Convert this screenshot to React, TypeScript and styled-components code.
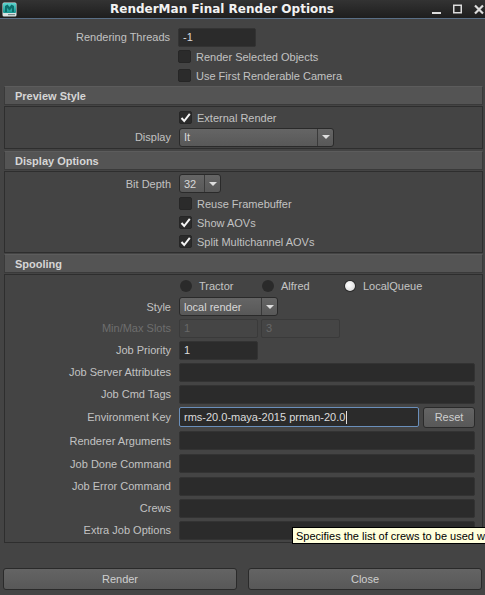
import React from 'react';
import styled, { createGlobalStyle } from 'styled-components';

const GlobalStyle = createGlobalStyle`
  html, body {
    margin: 0;
    padding: 0;
    background: #444444;
  }

  body {
    font-family: "Liberation Sans", Arial, sans-serif;
    font-size: 11px;
    color: #c4c4c4;
  }

  * {
    box-sizing: border-box;
  }
`;

// window chrome
const Window = styled.div`
  width: 485px;
  height: 595px;
  position: relative;
  overflow: hidden;

  display: flex;
  flex-direction: column;
  background: #444444;
`;

const TitleBar = styled.div`
  height: 19px;
  display: flex;
  align-items: center;
  padding-left: 2px;

  background: linear-gradient(#333333, #1e1e1e);
  border-bottom: 1px solid #5a6f86;
`;

const Title = styled.div`
  flex: 1;
  text-align: center;
  font-family: "DejaVu Sans", sans-serif;
  font-weight: bold;
  font-size: 12px;
  color: #f2f2f2;
`;

const WinControls = styled.div`
  width: 58px;
  display: flex;
  align-items: center;
  gap: 12px;
  padding-left: 5px;
`;

const Body = styled.div`
  flex: 1;
  display: flex;
  flex-direction: column;
  padding-top: 8px;
`;

const TopBlock = styled.div`
  padding-left: 4px;
  margin-bottom: 1px;
`;

// label / control rows
const Row = styled.div<{ $h: number }>`
  height: ${p => p.$h}px;
  display: grid;
  grid-template-columns: 166px 1fr;
  column-gap: 8px;
  align-items: center;
  padding-right: 7px;
`;

const Label = styled.div<{ $disabled?: boolean }>`
  text-align: right;
  white-space: nowrap;
  color: ${p => (p.$disabled ? '#6e6e6e' : '#c2c2c2')};
`;

const Inline = styled.div<{ $gap?: number }>`
  display: flex;
  align-items: center;
  gap: ${p => p.$gap ?? 3}px;
`;

const Field = styled.div<{ $w?: number; $focus?: boolean; $disabled?: boolean }>`
  ${p => (p.$w ? `width: ${p.$w}px;` : 'flex: 1;')}
  height: ${p => (p.$focus ? 20 : 19)}px;
  display: flex;
  align-items: center;
  padding-left: 4px;

  background: ${p => (p.$disabled ? '#454545' : '#2b2b2b')};
  border: 1px solid ${p => (p.$focus ? '#6a8fbb' : p.$disabled ? '#3a3a3a' : '#333333')};
  border-radius: 2px;
  color: ${p => (p.$disabled ? '#686868' : '#dcdcdc')};
  white-space: nowrap;
  overflow: hidden;
`;

const Caret = styled.span`
  display: inline-block;
  width: 1px;
  height: 13px;
  margin-left: 1px;
  background: #e0e0e0;
`;

const CheckItem = styled.div`
  display: flex;
  align-items: center;
  gap: 5px;
`;

const Box = styled.div`
  width: 13px;
  height: 13px;
  display: flex;
  align-items: center;
  justify-content: center;

  background: #2b2b2b;
  border: 1px solid #262626;
  border-radius: 2px;
`;

const CheckLabel = styled.span`
  color: #c2c2c2;
`;

// collapsible sections
const Section = styled.div<{ $gap: number }>`
  margin: ${p => p.$gap}px 2px 0 4px;
`;

const SectionHeader = styled.div`
  height: 19px;
  display: flex;
  align-items: center;
  padding-left: 10px;

  background: #545454;
  border: 1px solid #3a3a3a;
  border-top-color: #5c5c5c;
  font-weight: bold;
  color: #d6d6d6;
`;

const SectionFrame = styled.div<{ $gap: number }>`
  margin-top: ${p => p.$gap}px;
  padding: 1px 0;
  border: 1px solid #2e2e2e;
`;

const Select = styled.div<{ $w: number }>`
  width: ${p => p.$w}px;
  height: 19px;
  display: flex;

  background: linear-gradient(#656565, #585858);
  border: 1px solid #2a2a2a;
  border-radius: 3px;
  color: #d8d8d8;
`;

const SelectValue = styled.div`
  flex: 1;
  display: flex;
  align-items: center;
  padding-left: 4px;
`;

const SelectArrow = styled.div`
  width: 16px;
  display: flex;
  align-items: center;
  justify-content: center;
  border-left: 1px solid #3a3a3a;

  &::after {
    content: '';
    border-left: 4px solid transparent;
    border-right: 4px solid transparent;
    border-top: 4px solid #dedede;
  }
`;

const RadioGroup = styled.div`
  display: grid;
  grid-template-columns: 82px 82px auto;
  padding-left: 1px;
`;

const RadioItem = styled.div`
  display: flex;
  align-items: center;
  gap: 7px;
`;

const RadioDot = styled.div<{ $on?: boolean }>`
  width: 12px;
  height: 12px;
  display: flex;
  align-items: center;
  justify-content: center;
  border-radius: 50%;
  background: #2a2a2a;

  &::after {
    content: '';
    display: ${p => (p.$on ? 'block' : 'none')};
    width: 10px;
    height: 10px;
    border-radius: 50%;
    background: radial-gradient(circle at 40% 40%, #ffffff, #d0d0d0);
  }
`;

const PushButton = styled.div<{ $w?: number; $h?: number }>`
  ${p => (p.$w ? `width: ${p.$w}px;` : 'flex: 1;')}
  height: ${p => p.$h ?? 22}px;
  display: flex;
  align-items: center;
  justify-content: center;

  background: linear-gradient(#646464, #585858);
  border: 1px solid #2a2a2a;
  border-radius: 3px;
  color: #cfcfcf;
`;

const Footer = styled.div`
  flex: 1;
  display: flex;
  align-items: flex-end;
  gap: 11px;
  padding: 0 3px 5px;
`;

const Tooltip = styled.div`
  position: absolute;
  left: 292px;
  top: 527px;
  height: 17px;
  padding: 0 3px;

  display: flex;
  align-items: center;
  white-space: nowrap;

  background: #ffffdc;
  border: 1px solid #000000;
  color: #000000;
`;

const AppIcon = () => (
  <svg width="15" height="15" viewBox="0 0 15 15">
    <defs>
      <linearGradient id="mayaBg" x1="0" y1="0" x2="0" y2="1">
        <stop offset="0" stopColor="#5fd6d0" />
        <stop offset="1" stopColor="#12948f" />
      </linearGradient>
    </defs>
    <rect x="0.5" y="0.5" width="14" height="14" rx="1.5" fill="#d9e4e4" />
    <rect x="1" y="1" width="13" height="10" rx="1" fill="url(#mayaBg)" />
    <path d="M3 10 L3 4 L5.5 2.5 L7.5 5 L9.5 2.5 L12 4 L12 10 L10 10 L10 6 L7.5 8.5 L5 6 L5 10 Z" fill="#0b6e6b" />
    <rect x="6" y="12" width="7" height="1.2" fill="#7a8a8a" />
  </svg>
);

const Check = () => (
  <svg width="11" height="11" viewBox="0 0 11 11">
    <polyline points="1.5,6 4.2,9 9.8,1.8" fill="none" stroke="#f4f4f4" strokeWidth="2" />
  </svg>
);

const Checkbox = ({ label, checked }: { label: string; checked?: boolean }) => (
  <CheckItem>
    <Box>{checked && <Check />}</Box>
    <CheckLabel>{label}</CheckLabel>
  </CheckItem>
);

const Dropdown = ({ value, width }: { value: string; width: number }) => (
  <Select $w={width}>
    <SelectValue>{value}</SelectValue>
    <SelectArrow />
  </Select>
);

// spooling text rows around the environment key
const spoolFields: { label: string; h: number }[] = [
  { label: 'Job Server Attributes', h: 22 },
  { label: 'Job Cmd Tags', h: 22 },
];

const commandFields: { label: string; h: number }[] = [
  { label: 'Renderer Arguments', h: 23 },
  { label: 'Job Done Command', h: 23 },
  { label: 'Job Error Command', h: 22 },
  { label: 'Crews', h: 22 },
  { label: 'Extra Job Options', h: 22 },
];

const App: React.FC = () => {
  return (
    <Window>
      <GlobalStyle />
      <TitleBar>
        <AppIcon />
        <Title>RenderMan Final Render Options</Title>
        <WinControls>
          <svg width="9" height="11" viewBox="0 0 9 11">
            <rect x="0" y="8" width="9" height="2" fill="#dcdcdc" />
          </svg>
          <svg width="9" height="11" viewBox="0 0 9 11">
            <rect x="0.75" y="1.25" width="7.5" height="7.5" fill="none" stroke="#dcdcdc" strokeWidth="1.5" />
          </svg>
          <svg width="10" height="11" viewBox="0 0 10 11">
            <path d="M1 1.5 L9 9.5 M9 1.5 L1 9.5" stroke="#dcdcdc" strokeWidth="2.2" />
          </svg>
        </WinControls>
      </TitleBar>

      <Body>
        <TopBlock>
          <Row $h={20}>
            <Label>Rendering Threads</Label>
            <Field $w={78}>-1</Field>
          </Row>
          <Row $h={19}>
            <span />
            <Checkbox label="Render Selected Objects" />
          </Row>
          <Row $h={19}>
            <span />
            <Checkbox label="Use First Renderable Camera" />
          </Row>
        </TopBlock>

        <Section $gap={0}>
          <SectionHeader>Preview Style</SectionHeader>
          <SectionFrame $gap={1}>
            <Row $h={19}>
              <span />
              <Checkbox label="External Render" checked />
            </Row>
            <Row $h={20}>
              <Label>Display</Label>
              <Dropdown value="It" width={155} />
            </Row>
          </SectionFrame>
        </Section>

        <Section $gap={2}>
          <SectionHeader>Display Options</SectionHeader>
          <SectionFrame $gap={1}>
            <Row $h={21}>
              <Label>Bit Depth</Label>
              <Dropdown value="32" width={42} />
            </Row>
            <Row $h={19}>
              <span />
              <Checkbox label="Reuse Framebuffer" />
            </Row>
            <Row $h={19}>
              <span />
              <Checkbox label="Show AOVs" checked />
            </Row>
            <Row $h={19}>
              <span />
              <Checkbox label="Split Multichannel AOVs" checked />
            </Row>
          </SectionFrame>
        </Section>

        <Section $gap={1}>
          <SectionHeader>Spooling</SectionHeader>
          <SectionFrame $gap={1}>
            <Row $h={20}>
              <span />
              <RadioGroup>
                <RadioItem>
                  <RadioDot />
                  Tractor
                </RadioItem>
                <RadioItem>
                  <RadioDot />
                  Alfred
                </RadioItem>
                <RadioItem>
                  <RadioDot $on />
                  LocalQueue
                </RadioItem>
              </RadioGroup>
            </Row>
            <Row $h={21}>
              <Label>Style</Label>
              <Dropdown value="local render" width={99} />
            </Row>
            <Row $h={22}>
              <Label $disabled>Min/Max Slots</Label>
              <Inline>
                <Field $w={79} $disabled>1</Field>
                <Field $w={79} $disabled>3</Field>
              </Inline>
            </Row>
            <Row $h={22}>
              <Label>Job Priority</Label>
              <Field $w={79}>1</Field>
            </Row>
            {spoolFields.map(f => (
              <Row key={f.label} $h={f.h}>
                <Label>{f.label}</Label>
                <Field />
              </Row>
            ))}
            <Row $h={24}>
              <Label>Environment Key</Label>
              <Inline $gap={4}>
                <Field $focus>
                  rms-20.0-maya-2015 prman-20.0
                  <Caret />
                </Field>
                <PushButton $w={52} $h={21}>
                  Reset
                </PushButton>
              </Inline>
            </Row>
            {commandFields.map(f => (
              <Row key={f.label} $h={f.h}>
                <Label>{f.label}</Label>
                <Field />
              </Row>
            ))}
          </SectionFrame>
        </Section>

        <Footer>
          <PushButton>Render</PushButton>
          <PushButton>Close</PushButton>
        </Footer>
      </Body>

      <Tooltip>Specifies the list of crews to be used when submitting the job</Tooltip>
    </Window>
  );
};

export default App;
